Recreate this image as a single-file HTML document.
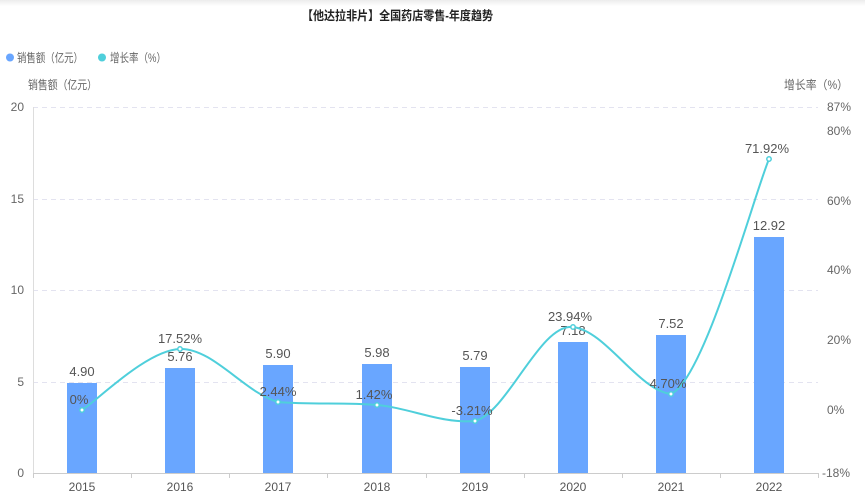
<!DOCTYPE html>
<html><head><meta charset="utf-8"><style>
body{margin:0;width:865px;height:498px;background:#fff;overflow:hidden;font-family:"Liberation Sans","Noto Sans CJK SC",sans-serif}
</style></head><body>
<div style="position:absolute;left:0;top:0;width:865px;height:6px;background:linear-gradient(#ececec,#fff)"></div>
<svg width="865" height="498" style="position:absolute;left:0;top:0" font-family="Liberation Sans, Noto Sans CJK SC, sans-serif">
<text x="302" y="20" font-size="12.5" font-weight="bold" fill="#222" textLength="191" lengthAdjust="spacingAndGlyphs">【他达拉非片】全国药店零售-年度趋势</text>
<circle cx="10" cy="57.5" r="4" fill="#69a6ff"/>
<text x="17" y="62" font-size="12" fill="#666" textLength="66" lengthAdjust="spacingAndGlyphs">销售额（亿元）</text>
<circle cx="102" cy="57.5" r="4" fill="#4fcfdb"/>
<text x="110" y="62" font-size="12" fill="#666" textLength="56" lengthAdjust="spacingAndGlyphs">增长率（%）</text>
<text x="28" y="89" font-size="12" fill="#666" textLength="69" lengthAdjust="spacingAndGlyphs">销售额（亿元）</text>
<text x="784" y="89" font-size="12" fill="#666" textLength="64" lengthAdjust="spacingAndGlyphs">增长率（%）</text>
<g stroke="#e3e3f0" stroke-dasharray="5,4" stroke-width="1">
<line x1="33" y1="107.5" x2="818" y2="107.5"/><line x1="33" y1="199.5" x2="818" y2="199.5"/><line x1="33" y1="290.5" x2="818" y2="290.5"/><line x1="33" y1="382.5" x2="818" y2="382.5"/></g>
<line x1="33.5" y1="107" x2="33.5" y2="473" stroke="#ddd"/>
<line x1="33" y1="473.5" x2="818" y2="473.5" stroke="#ccc"/>
<g stroke="#ccc"><line x1="33.5" y1="473" x2="33.5" y2="478"/><line x1="131.5" y1="473" x2="131.5" y2="478"/><line x1="229.5" y1="473" x2="229.5" y2="478"/><line x1="327.5" y1="473" x2="327.5" y2="478"/><line x1="426.5" y1="473" x2="426.5" y2="478"/><line x1="524.5" y1="473" x2="524.5" y2="478"/><line x1="622.5" y1="473" x2="622.5" y2="478"/><line x1="720.5" y1="473" x2="720.5" y2="478"/><line x1="818.5" y1="473" x2="818.5" y2="478"/></g>
<g font-size="12" fill="#666" text-anchor="end"><text x="24" y="111">20</text><text x="24" y="203">15</text><text x="24" y="294">10</text><text x="24" y="386">5</text><text x="24" y="477">0</text></g>
<g font-size="12" fill="#666"><text x="827" y="111">87%</text><text x="827" y="135">80%</text><text x="827" y="205">60%</text><text x="827" y="274">40%</text><text x="827" y="344">20%</text><text x="827" y="414">0%</text><text x="822" y="477">-18%</text></g>
<g font-size="12" fill="#555" text-anchor="middle"><text x="82" y="491">2015</text><text x="180" y="491">2016</text><text x="278" y="491">2017</text><text x="377" y="491">2018</text><text x="475" y="491">2019</text><text x="573" y="491">2020</text><text x="671" y="491">2021</text><text x="769" y="491">2022</text></g>
<g fill="#69a6ff"><rect x="67" y="383" width="30" height="90"/><rect x="165" y="368" width="30" height="105"/><rect x="263" y="365" width="30" height="108"/><rect x="362" y="364" width="30" height="109"/><rect x="460" y="367" width="30" height="106"/><rect x="558" y="342" width="30" height="131"/><rect x="656" y="335" width="30" height="138"/><rect x="754" y="237" width="30" height="236"/></g>
<g font-size="13" fill="#555" text-anchor="middle"><text x="82" y="376">4.90</text><text x="180" y="361">5.76</text><text x="278" y="358">5.90</text><text x="377" y="357">5.98</text><text x="475" y="360">5.79</text><text x="573" y="335">7.18</text><text x="671" y="328">7.52</text><text x="769" y="230">12.92</text></g>
<path d="M82,410 C98,400 147,350 180,349 C213,348 245,393 278,402 C311,405 344,402 377,405 C410,408 442,424 475,421 C508,412 540,323 573,327 C606,331 638,390 671,394 C704,380 753,198 769,159" fill="none" stroke="#4fcfdb" stroke-width="2"/>
<g fill="#fff" stroke="#4fcfdb" stroke-width="1.5"><circle cx="82" cy="410" r="2.2"/><circle cx="180" cy="349" r="2.2"/><circle cx="278" cy="402" r="2.2"/><circle cx="377" cy="405" r="2.2"/><circle cx="475" cy="421" r="2.2"/><circle cx="573" cy="327" r="2.2"/><circle cx="671" cy="394" r="2.2"/><circle cx="769" cy="159" r="2.2"/></g>
<g font-size="13" fill="#555" text-anchor="middle"><text x="79" y="404">0%</text><text x="180" y="343">17.52%</text><text x="278" y="396">2.44%</text><text x="374" y="399">1.42%</text><text x="472" y="415">-3.21%</text><text x="570" y="321">23.94%</text><text x="668" y="388">4.70%</text><text x="767" y="153">71.92%</text></g>
</svg>
</body></html>
